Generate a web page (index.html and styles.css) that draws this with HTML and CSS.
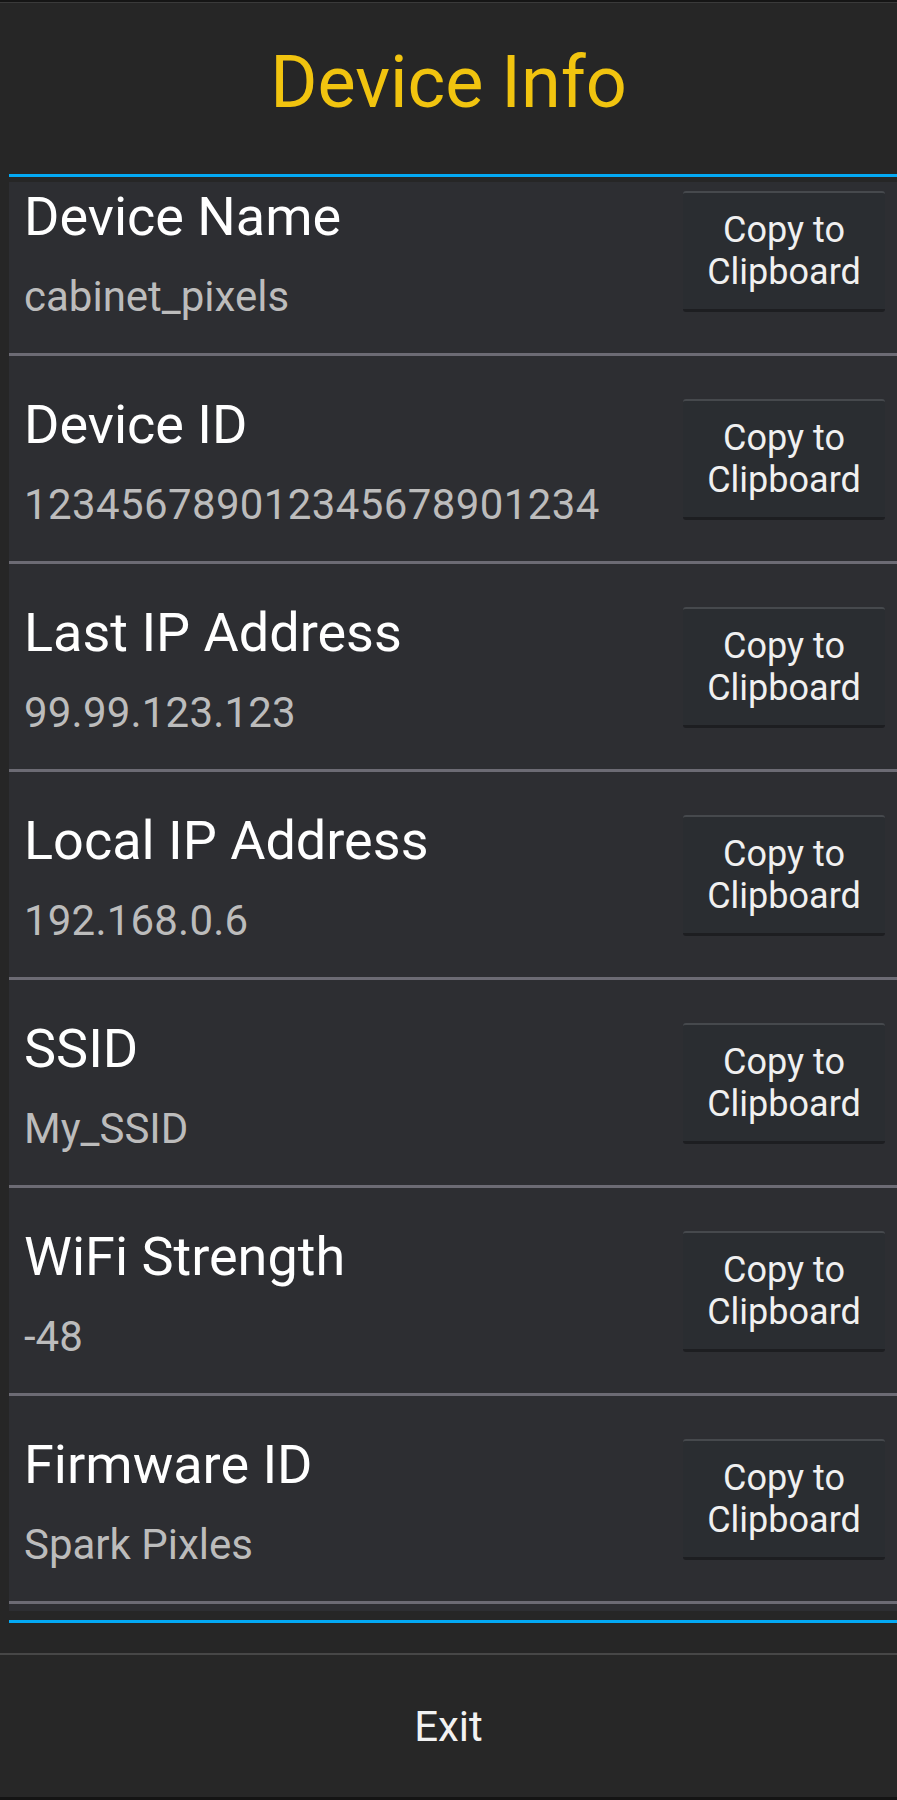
FILE: index.html
```html
<!DOCTYPE html>
<html>
<head>
<meta charset="utf-8">
<title>Device Info</title>
<link rel="stylesheet" href="styles.css">
</head>
<body>
<div class="page">
  <header class="header">
    <h1 class="title">Device Info</h1>
  </header>
  <div class="accent accent-top"></div>
  <div class="list">
    <div class="list-inner">
      <div class="row">
        <div class="info"><div class="label">Device Name</div><div class="value">cabinet_pixels</div></div>
        <button class="copy">Copy to<br>Clipboard</button>
      </div>
      <div class="row">
        <div class="info"><div class="label">Device ID</div><div class="value num">123456789012345678901234</div></div>
        <button class="copy">Copy to<br>Clipboard</button>
      </div>
      <div class="row">
        <div class="info"><div class="label">Last IP Address</div><div class="value num-short">99.99.123.123</div></div>
        <button class="copy">Copy to<br>Clipboard</button>
      </div>
      <div class="row">
        <div class="info"><div class="label">Local IP Address</div><div class="value num-short">192.168.0.6</div></div>
        <button class="copy">Copy to<br>Clipboard</button>
      </div>
      <div class="row">
        <div class="info"><div class="label">SSID</div><div class="value">My_SSID</div></div>
        <button class="copy">Copy to<br>Clipboard</button>
      </div>
      <div class="row">
        <div class="info"><div class="label">WiFi Strength</div><div class="value">-48</div></div>
        <button class="copy">Copy to<br>Clipboard</button>
      </div>
      <div class="row">
        <div class="info"><div class="label">Firmware ID</div><div class="value">Spark Pixles</div></div>
        <button class="copy">Copy to<br>Clipboard</button>
      </div>
    </div>
  </div>
  <div class="accent accent-bottom"></div>
  <footer class="footer">
    <button class="exit">Exit</button>
  </footer>
</div>
</body>
</html>
```

FILE: styles.css
```css
html, body {
  margin: 0;
  padding: 0;
  background: #262626;
}
body {
  font-family: Roboto, "Liberation Sans", sans-serif;
}
.page {
  width: 897px;
  height: 1800px;
  display: flex;
  flex-direction: column;
  background: #262626;
  overflow: hidden;
}
.header {
  height: 133px;
  padding-top: 39px;
  border-top: 2px solid #151515;
  box-shadow: inset 0 1px 0 #3a3a3a;
  display: flex;
  justify-content: center;
  align-items: flex-start;
  flex: none;
}
.title {
  margin: 0;
  font-size: 72px;
  line-height: 84px;
  font-weight: 400;
  color: #f1c40f;
}
.accent {
  height: 3px;
  margin-left: 9px;
  background: #03a9f4;
  flex: none;
}
.accent-top {
  margin-bottom: 5px;
}
.accent-bottom {
  margin-top: 9px;
  margin-bottom: 30px;
}
.list {
  height: 1429px;
  margin-left: 9px;
  background: #2d2e32;
  overflow: hidden;
  flex: none;
}
.list-inner {
  margin-top: -34px;
}
.row {
  height: 205px;
  border-bottom: 3px solid #6c6b74;
  display: flex;
  justify-content: space-between;
  align-items: flex-start;
  padding: 0 12px 0 15px;
}
.info {
  padding-top: 38px;
}
.label {
  font-size: 54px;
  line-height: 62px;
  color: #ffffff;
}
.value {
  margin-top: 25px;
  font-size: 42px;
  line-height: 48px;
  color: #bcbcbc;
}
.num {
  letter-spacing: 0.38px;
}
.num-short {
  letter-spacing: 0.2px;
}
.copy {
  margin-top: 43px;
  width: 202px;
  height: 121px;
  box-sizing: border-box;
  background: #2a2d31;
  border: none;
  border-top: 2px solid #46494d;
  border-bottom: 3px solid #1d1e21;
  border-radius: 3px;
  color: #f0f0f0;
  font-family: Roboto, "Liberation Sans", sans-serif;
  font-size: 36px;
  line-height: 42px;
  padding: 0;
  display: flex;
  align-items: center;
  justify-content: center;
  text-align: center;
}
.footer {
  border-top: 2px solid #474747;
  border-bottom: 3px solid #141414;
  height: 142px;
  display: flex;
  flex: none;
}
.exit {
  flex: 1;
  background: #272727;
  border: none;
  color: #f2f2f2;
  font-family: Roboto, "Liberation Sans", sans-serif;
  font-size: 42px;
  padding: 0;
}
```
